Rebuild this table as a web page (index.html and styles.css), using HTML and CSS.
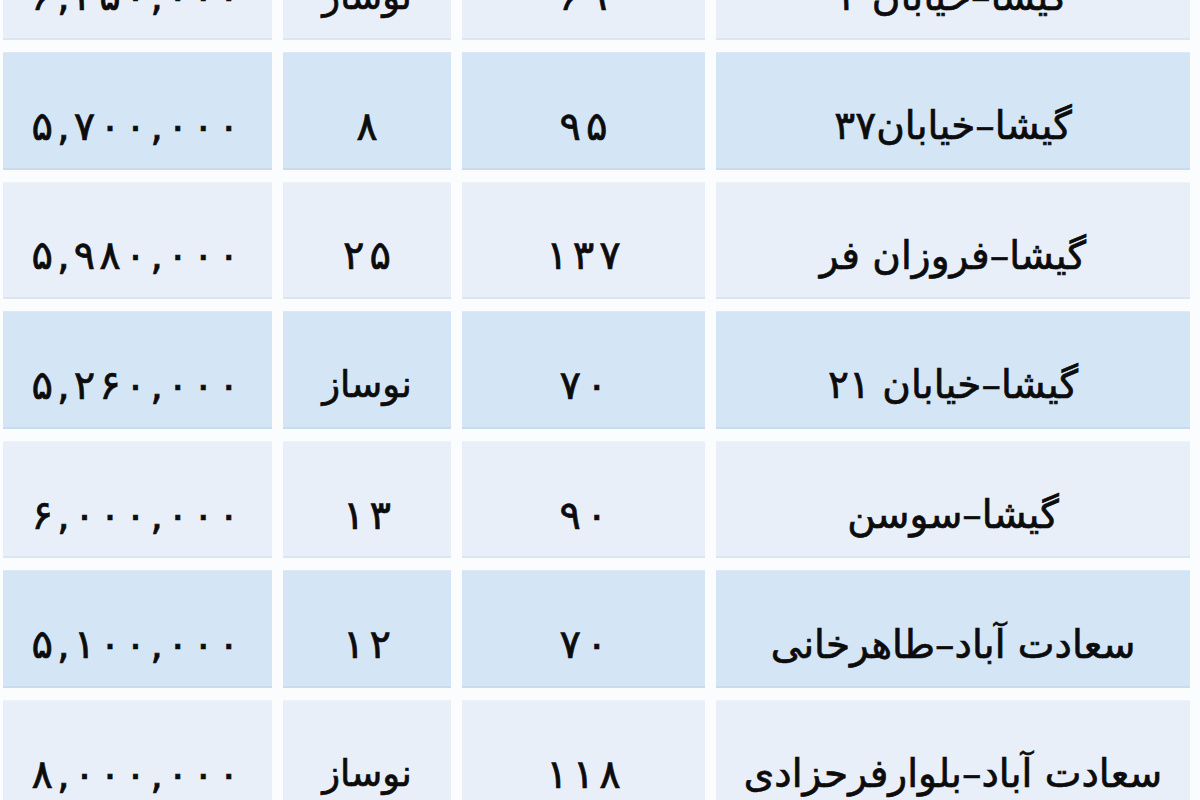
FILE: index.html
```html
<!DOCTYPE html>
<html lang="fa" dir="rtl">
<head>
<meta charset="utf-8">
<title>قیمت مسکن</title>
<link rel="stylesheet" href="styles.css">
</head>
<body>
<div class="table">
  <div class="row light">
    <div class="cell name">گیشا–خیابان ۲</div>
    <div class="cell num"><span>۶</span><span>۹</span></div>
    <div class="cell age">نوساز</div>
    <div class="cell num price"><span>۶</span><span>,</span><span>۲</span><span>۵</span><span>۰</span><span>,</span><span>۰</span><span>۰</span><span>۰</span></div>
  </div>
  <div class="row dark">
    <div class="cell name">گیشا–خیابان۳۷</div>
    <div class="cell num"><span>۹</span><span>۵</span></div>
    <div class="cell num"><span>۸</span></div>
    <div class="cell num price"><span>۵</span><span>,</span><span>۷</span><span>۰</span><span>۰</span><span>,</span><span>۰</span><span>۰</span><span>۰</span></div>
  </div>
  <div class="row light">
    <div class="cell name">گیشا–فروزان فر</div>
    <div class="cell num"><span>۱</span><span>۳</span><span>۷</span></div>
    <div class="cell num"><span>۲</span><span>۵</span></div>
    <div class="cell num price"><span>۵</span><span>,</span><span>۹</span><span>۸</span><span>۰</span><span>,</span><span>۰</span><span>۰</span><span>۰</span></div>
  </div>
  <div class="row dark">
    <div class="cell name">گیشا–خیابان ۲۱</div>
    <div class="cell num"><span>۷</span><span>۰</span></div>
    <div class="cell age">نوساز</div>
    <div class="cell num price"><span>۵</span><span>,</span><span>۲</span><span>۶</span><span>۰</span><span>,</span><span>۰</span><span>۰</span><span>۰</span></div>
  </div>
  <div class="row light">
    <div class="cell name">گیشا–سوسن</div>
    <div class="cell num"><span>۹</span><span>۰</span></div>
    <div class="cell num"><span>۱</span><span>۳</span></div>
    <div class="cell num price"><span>۶</span><span>,</span><span>۰</span><span>۰</span><span>۰</span><span>,</span><span>۰</span><span>۰</span><span>۰</span></div>
  </div>
  <div class="row dark">
    <div class="cell name">سعادت آباد–طاهرخانی</div>
    <div class="cell num"><span>۷</span><span>۰</span></div>
    <div class="cell num"><span>۱</span><span>۲</span></div>
    <div class="cell num price"><span>۵</span><span>,</span><span>۱</span><span>۰</span><span>۰</span><span>,</span><span>۰</span><span>۰</span><span>۰</span></div>
  </div>
  <div class="row light">
    <div class="cell name">سعادت آباد–بلوارفرحزادی</div>
    <div class="cell num"><span>۱</span><span>۱</span><span>۸</span></div>
    <div class="cell age">نوساز</div>
    <div class="cell num price"><span>۸</span><span>,</span><span>۰</span><span>۰</span><span>۰</span><span>,</span><span>۰</span><span>۰</span><span>۰</span></div>
  </div>
</div>
</body>
</html>
```

FILE: styles.css
```css
html, body {
  margin: 0;
  padding: 0;
  background: #fafcfe;
  overflow: hidden;
  height: 800px;
}

.table {
  direction: rtl;
  display: flex;
  flex-direction: column;
  gap: 12px;
  margin-top: -77.6px;
  padding: 0 10px 0 4px;
  font-family: "DejaVu Sans", sans-serif;
  color: #0c0c0c;
}

.row {
  display: grid;
  grid-template-columns: 474px 243px 168px 269px;
  column-gap: 11px;
  height: 117.6px;
}

.cell {
  display: flex;
  align-items: center;
  justify-content: center;
  padding-top: 30px;
  box-sizing: border-box;
  font-size: 37px;
  font-weight: normal;
  -webkit-text-stroke: 0.7px #0c0c0c;
  white-space: nowrap;
}

.name {
  font-size: 39px;
}

.num {
  direction: ltr;
  font-size: 40px;
  gap: 5px;
}

.num.price {
  gap: 4px;
  padding-right: 4px;
}

.dark .cell {
  background: #d4e5f6;
  box-shadow: inset 0 -2px 0 #c9dced, inset 0 1px 0 #dbe9f8;
}

.light .cell {
  background: #e8eff9;
  box-shadow: inset 0 -2px 0 #dce6f2, inset 0 1px 0 #edf3fb;
}
```
